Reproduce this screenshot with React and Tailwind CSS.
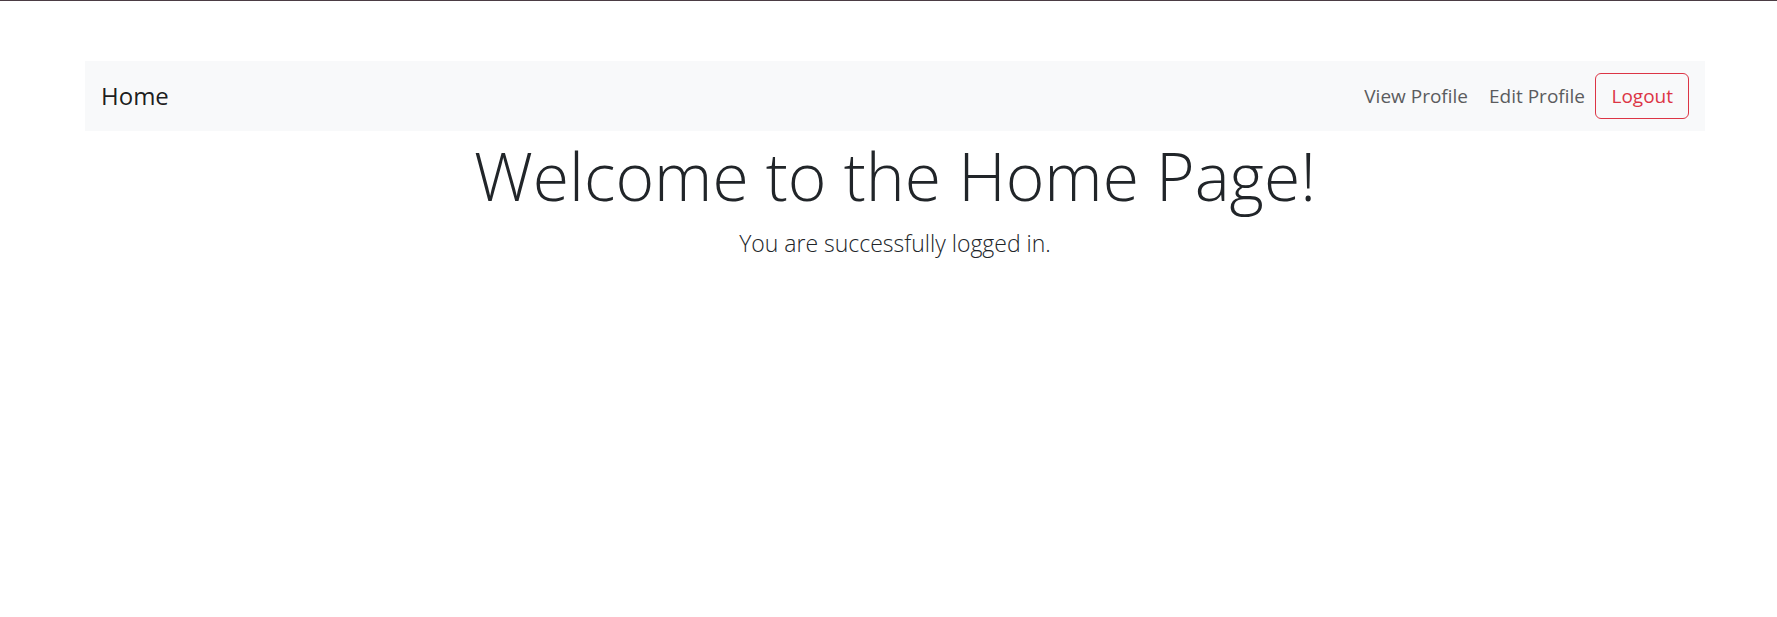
import React from 'react'

const NAV_LINKS = ['View Profile', 'Edit Profile']

function Navbar() {
  return (
    <nav className="ml-[85px] mt-[60px] flex h-[70px] w-[1620px] items-center justify-between bg-[#f8f9fa] pl-4 pr-4">
      <a href="#" className="text-[24px] leading-none text-black/90">Home</a>
      <div className="flex items-center">
        {NAV_LINKS.map(label => (
          <a key={label} href="#" className="px-[10.5px] text-[19px] text-[#5b5c5e]">
            {label}
          </a>
        ))}
        <button className="h-[46px] rounded-[6px] border border-[#dc3545] px-[15px] text-[19px] text-[#dc3545]">
          Logout
        </button>
      </div>
    </nav>
  )
}

export default function App() {
  return (
    <div
      className="min-h-screen bg-white border-t border-[#4b3c44]"
      style={{ fontFamily: '"Open Sans", "Noto Sans", Arial, sans-serif' }}
    >
      <Navbar />
      <main className="ml-[85px] w-[1620px] text-center text-[#212529]">
        <h1 className="mt-[5px] text-[66px] font-light leading-[1.2]">Welcome to the Home Page!</h1>
        <p className="mt-[11px] text-[23px] font-light leading-[1.5]">You are successfully logged in.</p>
      </main>
    </div>
  )
}
